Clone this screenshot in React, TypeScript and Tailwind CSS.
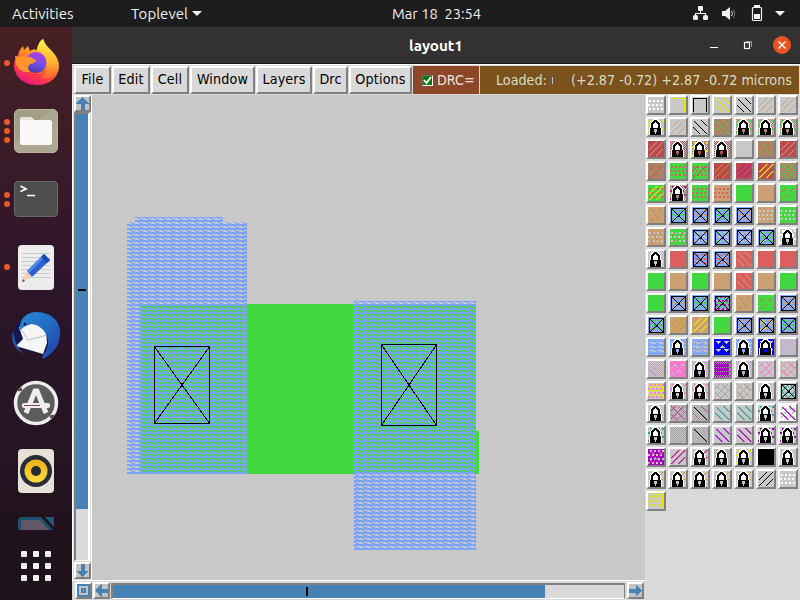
import React from "react";

const PAL: Record<string, string> = {
  g: "#c8c8c8", G: "#41d841", t: "#cba073", b: "#ad8163", r: "#dc5f5f", R: "#b94a50",
  w: "#ffffff", k: "#000000", y: "#e8e800", o: "#c99712", m: "#c7148f", p: "#ff78d0",
  B: "#82a9fc", N: "#0000f5", V: "#aa00c8", T: "#2aa6a0", s: "#a0a0a0", l: "#c0a8d0", P: "#c8509a",
};

const ROWS: string[] = [
  "g.dw g.uy g.uk g.\\y g.\\k g./t g./t",
  "g.cy.L g./t g.\\k b.\\G g.hb.cG.L g.hb.cG.L g.hb.cG.L",
  "R./t g.hR.L g.hR.cy.L g.hR.L g b.-r.=G R./t",
  "b.-R G.dr G.dr.-R R./o R./m R./y b.xG",
  "G.dr./y g.hb.cm.L G.dr t.dr G t G.-r",
  "t.=b B.nG.X B.nt.X B.nG.X B.nt.X t.dg G.dg",
  "t.dg.=b G.dg.-r B.ng.=t.X B.ng.=G.X B.ng.=t.X B.nG.-g.X g.cw.L",
  "g.L r B.nr.X B.nr.=t.X r.\\t r r",
  "G t G t r.\\t t G",
  "G B.nt.X B.nG.X B.nG.cm.X t.=b G.-r B.nt.X",
  "B.nG.-r.X t./o t./y G B.nt.X B.nt.-y.X B.nG.X",
  "B.ng B.ng.L B.ng.\\t N.vg B.ng.L N.vg.L g.hl",
  "g.hl.\\t p.=g.-g g.hl.L V.ng.hs.mV g.hl.L g.xp g.xp.\\t",
  "g.uy.dy.cp g.cp.L g.cp.L g.xs g.xs.\\t g.L g.\\T./T.X",
  "g.L s.hg.xP s.hg.\\P.Dk g.\\T g.|t.\\T g.cT.L w.dg.\\V",
  "g.cT.L s.hg s.hg.Dk g.\\V g.|t.\\V g.cV.L g.cV.L",
  "V.cg.-m.=s g./m g./m.L s.hg.L g.cy.L k g.L",
  "g./o.L g./o.L g./o.L g./o.L g./o.L g./k g.dw",
  "g.uy.dy",
];

const THICK = ["#2aa6a0", "#aa00c8", "#c7148f", "#e8e800"];

/* Stair-stepped diagonals: each segment is [x, y, length, vertical direction]. */
function steps(segments: number[][], color: string) {
  const w = THICK.includes(color) ? 1.6 : 1;
  const d = segments
    .map(([x, y, n, dir]) => Array.from({ length: n }, (_, i) => `M${x + i} ${y + i * dir}h${w}v1h-${w}z`).join(""))
    .join("");
  return <path d={d} fill={color} shapeRendering={w > 1 ? "auto" : "crispEdges"} />;
}

const LAYERS: Record<string, (c: string) => React.ReactNode> = {
  d: (c) => (
    <g fill={c}>
      {[3, 7, 11].map((y) => [1, 5, 9, 13].map((x) => <rect key={`${x}-${y}`} x={x + (y === 7 ? -1 : 0)} y={y} width="2" height="2" />))}
    </g>
  ),
  h: (c) => (
    <g fill={c}>
      {Array.from({ length: 128 }, (_, i) => {
        const y = Math.floor(i / 8);
        return <rect key={i} x={(i % 8) * 2 + (y % 2)} y={y} width="1" height="1" />;
      })}
    </g>
  ),
  u: (c) => <path d="M1 15V1H15V15H14V2H2V15z" fill={c} />,
  "\\": (c) => steps([[1, 8, 7, 1], [2, 2, 13, 1], [9, 1, 6, 1]], c),
  "|": (c) => steps([[1, 7, 8, 1], [3, 2, 12, 1], [10, 1, 5, 1]], c),
  "/": (c) => steps([[1, 8, 8, -1], [1, 14, 14, -1], [8, 14, 7, -1]], c),
  x: (c) => steps([[1, 5, 5, -1], [1, 13, 13, -1], [6, 15, 10, -1], [1, 9, 6, 1], [1, 1, 14, 1], [8, 1, 7, 1]], c),
  "-": (c) => steps([[2, 6, 4, -1], [10, 6, 4, -1], [5, 12, 4, -1], [1, 14, 2, -1]], c),
  "=": (c) => steps([[3, 2, 4, 1], [11, 2, 3, 1], [7, 8, 4, 1], [2, 11, 3, 1]], c),
  c: (c) => (
    <g fill={c}>
      {[1, 5, 9, 13].map((y) => [2, 6, 10, 14].map((x) => <rect key={`${x}-${y}`} x={x - (y % 8 === 5 ? 2 : 0)} y={y} width="1.5" height="1.5" />))}
    </g>
  ),
  n: (c) => <path d="M1 3.5h5M9 3.5h5M4 4.5h4M12 4.5h4M1 7.5h5M9 7.5h5M4 8.5h4M12 8.5h4M1 11.5h5M9 11.5h5M4 12.5h4M12 12.5h4" stroke={c} />,
  m: (c) => <path d="M1 4.5h14M1 8.5h14M1 12.5h14" stroke={c} strokeWidth="3" />,
  v: (c) => <path d="M1 2l3 3 3-3zM9 2l3 3 3-3zM5 9l3-3 3 3zM1 10l3 3 3-3zM9 10l3 3 3-3z" fill={c} />,
  D: (c) => steps([[2, 2, 13, 1]], c),
};

function Swatch({ spec }: { spec: string }) {
  const [base, ...layers] = spec.split(".");
  return (
    <div className="h-5 w-5 border-2 border-t-white border-l-white border-r-[#808080] border-b-[#808080] bg-[#d9d9d9]">
      <svg width="16" height="16" viewBox="0 0 16 16" shapeRendering="crispEdges" className="block">
        <rect width="16" height="16" fill={PAL[base]} />
        {layers.map((l, i) => {
          if (l === "L")
            return (
              <g key={i}>
                <path d="M1 16V9H2V4H3V2H4V1H5V0H10V1H11V2H12V4H13V9H14V16z" fill="#fff" />
                <path d="M3 9V4H4V3H5V2H6V1H9V2H10V3H11V4H12V9H10V5H9V4H8V3H7V4H6V5H5V9z" fill="#000" />
                <rect x="2" y="9" width="11" height="7" fill="#000" />
                <path d="M6 10h3v3H8v2H7v-2H6z" fill={PAL[layers[0][0] === "h" ? layers[0][1] : base]} />
              </g>
            );
          if (l === "X")
            return (
              <g key={i} stroke="#000" fill="none">
                <rect x="1.5" y="1.5" width="14" height="14" />
                <path d="M2 2L15 15M15 2L2 15" />
                <rect x="7.5" y="7.5" width="2" height="2" fill="#000" stroke="none" />
              </g>
            );
          return <g key={i}>{LAYERS[l[0]](PAL[l[1]])}</g>;
        })}
      </svg>
    </div>
  );
}

function Contact({ x, y, w, h }: { x: number; y: number; w: number; h: number }) {
  return (
    <g stroke="#000" fill="none">
      <rect x={x + 0.5} y={y + 0.5} width={w - 1} height={h - 1} />
      <path d={`M${x} ${y}L${x + w} ${y + h}M${x + w} ${y}L${x} ${y + h}`} />
    </g>
  );
}

function LayoutCanvas() {
  return (
    <svg width="553" height="485" viewBox="92 95 553 485" shapeRendering="crispEdges" className="block bg-[#c8c8c8]">
      <defs>
        <pattern id="metal" width="8" height="4" patternUnits="userSpaceOnUse">
          <path d="M0 0h8v2H0zM2 2h2v1H2zM4 3h3v1H4z" fill="#7ba3fb" />
        </pattern>
        <pattern id="metalDiff" width="8" height="8" patternUnits="userSpaceOnUse">
          <rect width="8" height="8" fill="#7ba3fb" />
          <path d="M4 2h4v1H4zM0 2h2v1H0zM7 3h1v1H7zM0 3h4v1H0zM4 6h4v1H4zM0 6h2v1H0zM7 7h1v1H7zM0 7h4v1H0zM2 4h2v1H2z" fill="#41d841" />
        </pattern>
      </defs>
      <path d="M135 217H223V222H247V474H127V222H135z" fill="url(#metal)" />
      <path d="M354 301H476V550H354z" fill="url(#metal)" />
      <rect x="140" y="304" width="107" height="170" fill="url(#metalDiff)" />
      <rect x="247" y="304" width="107" height="170" fill="#41d841" />
      <rect x="354" y="304" width="122" height="170" fill="url(#metalDiff)" />
      <rect x="476" y="431" width="3" height="43" fill="#41d841" />
      <Contact x={154} y={346} w={56} h={78} />
      <Contact x={381} y={344} w={56} h={82} />
    </svg>
  );
}

const ARROWS: Record<string, string> = {
  up: "M6.5 0L13 6.5H8.5V13H4.5V6.5H0z",
  down: "M6.5 13L13 6.5H8.5V0H4.5V6.5H0z",
  left: "M0 6.5L6.5 0V4.5H13V8.5H6.5V13z",
  right: "M13 6.5L6.5 0V4.5H0V8.5H6.5V13z",
};

function ArrowButton({ dir }: { dir: string }) {
  return (
    <div className="flex h-[17px] w-[17px] shrink-0 items-center justify-center border-2 border-t-white border-l-white border-r-[#808080] border-b-[#808080] bg-[#c3c3c3]">
      <svg width="13" height="13" viewBox="0 0 13 13" shapeRendering="crispEdges" className="shrink-0">
        {dir === "zoom" ? (
          <g fill="none" stroke="#4682b4" strokeWidth="2">
            <rect x="1" y="1" width="11" height="11" />
            <rect x="5" y="5" width="3" height="3" />
          </g>
        ) : (
          <path d={ARROWS[dir]} fill="#4682b4" />
        )}
      </svg>
    </div>
  );
}

function DockItem({ dots, children, className }: { dots: number; children: React.ReactNode; className: string }) {
  return (
    <div className={`flex w-[72px] items-center ${className}`}>
      <div className="ml-1 flex w-[6px] shrink-0 flex-col gap-[3px]">
        {Array.from({ length: dots }, (_, i) => (
          <i key={i} className="block h-[6px] w-[6px] rounded-full bg-[#ec5a29]" />
        ))}
      </div>
      <svg width="52" height="52" viewBox="0 0 52 52" className="block shrink-0">{children}</svg>
    </div>
  );
}

function Dock() {
  return (
    <aside className="flex w-[72px] shrink-0 flex-col bg-linear-to-b from-[#482025] via-[#2d152a] via-45% to-[#1d121a] pt-[10px]">
      <svg width="0" height="0" className="absolute">
        <defs>
          <linearGradient id="fox" x1="0.8" y1="0" x2="0.3" y2="1">
            <stop stopColor="#fff44f" /><stop offset=".4" stopColor="#ff9a24" /><stop offset=".75" stopColor="#ff3c45" /><stop offset="1" stopColor="#e31587" />
          </linearGradient>
          <linearGradient id="foxGold" x1="0" y1="0" x2="0" y2="1">
            <stop stopColor="#fff44f" /><stop offset=".6" stopColor="#ffb32c" /><stop offset="1" stopColor="#ff5f35" />
          </linearGradient>
          <linearGradient id="globe" x1=".7" y1="0" x2=".4" y2="1">
            <stop stopColor="#b83be4" /><stop offset=".55" stopColor="#7450ea" /><stop offset="1" stopColor="#483aa4" />
          </linearGradient>
          <linearGradient id="bird" x1="0" y1="0" x2="1" y2="1">
            <stop stopColor="#2c8bd7" /><stop offset=".5" stopColor="#1f6bc2" /><stop offset="1" stopColor="#2939a5" />
          </linearGradient>
          <linearGradient id="speaker" x1="0" y1="0" x2="0" y2="1"><stop stopColor="#e8b31b" /><stop offset="1" stopColor="#ffda3e" /></linearGradient>
        </defs>
      </svg>
      <DockItem dots={1} className="h-[52px]">
        <path d="M8 21C8 15 11 11 13 9L14 13L18 9L20 14Q24 11 27 13Q28 6 33 2Q35 8 41 13Q49 21 49 29C49 40 40 48 27 48C13 48 4 39 4 28Q4 24 8 18z" fill="url(#fox)" />
        <path d="M27 13Q28 5 33 2Q35 8 41 14Q48 20 48 30Q45 43 32 41Q38 34 36 25Q34 16 27 13z" fill="url(#foxGold)" />
        <circle cx="26" cy="25.500" r="10.500" fill="url(#globe)" />
        <path d="M5 19Q9 20 14 19L20 20L26 23Q26 26 20 27Q16 31 20 35Q10 37 6 27z" fill="#ff942d" />
      </DockItem>
      <DockItem dots={3} className="mt-4 h-[52px]">
        <rect x="4.500" y="4.500" width="43" height="43" rx="4.500" fill="#a39c87" stroke="#bdb5a0" />
        <path d="M5 36L40 5H44Q47 5 47 9V43Q47 47 43 47H9Q5 47 5 43z" fill="#fff" opacity=".1" />
        <path d="M10 17V14Q10 12 12 12H21L26 16z" fill="#e8e4d8" />
        <rect x="10" y="15" width="32" height="25" rx="2.500" fill="#faf9f7" />
      </DockItem>
      <DockItem dots={2} className="mt-4 h-[52px]">
        <rect x="4.500" y="8.500" width="43" height="35" rx="3.500" fill="#4d4d4d" stroke="#69696a" />
        <path d="M10.500 13L16 16L10.500 18.500" fill="none" stroke="#fff" strokeWidth="1.700" />
        <path d="M17 22.500h8" stroke="#fff" strokeWidth="1.500" />
      </DockItem>
      <DockItem dots={1} className="mt-4 h-[52px]">
        <rect x="8" y="4" width="36" height="45" rx="4" fill="#ececec" />
        <path d="M12 12.500H40M12 16.500H40M12 20.500H40M12 24.500H40M12 28.500H40M12 32.500H40M12 36.500H40" stroke="#c2c2c2" strokeWidth=".8" />
        <path d="M12 41L17 31L21 36z" fill="#f6cda9" /><path d="M12 41L13 38L15 40z" fill="#444" />
        <path d="M17 30L34 13L40 19L22 36z" fill="#2860d2" /><path d="M17 30L34 13L36 15L19 32z" fill="#5088ed" />
        <path d="M34 13L40 19L37 22L31 16z" fill="#174db8" />
      </DockItem>
      <DockItem dots={0} className="mt-4 h-[52px]">
        <path d="M11 12Q18 2 32 4Q49 8 50 27Q49 42 36 49L33 45Q14 42 5 37Q-1 25 9 13z" fill="#151650" />
        <path d="M9 18L13 30L6 37L33 45L37 34L36 22L25 14z" fill="#f5f6f8" />
        <path d="M10 18L18 31L37 26" stroke="#bcc1cb" fill="none" />
        <path d="M11 12Q16 3 27 3Q46 4 50 20Q52 40 33 50Q31 48 36 42Q40 35 36 25Q30 15 21 15Q14 17 9 22z" fill="url(#bird)" />
        <path d="M3 22Q-1 37 14 45Q9 41 7 36Q5 33 3 22z" fill="#2757b4" />
        <circle cx="15" cy="15" r="1.300" fill="#101340" />
      </DockItem>
      <DockItem dots={0} className="mt-4 h-[52px]">
        <circle cx="26" cy="26" r="20.500" fill="#5c5c5c" stroke="#ededed" strokeWidth="3.500" />
        <path d="M8 13L12 12M40 40L44 39" stroke="#50504f" strokeWidth="3" />
        <path d="M16 36L25 14H27L36 36" fill="none" stroke="#eee" strokeWidth="5" />
        <rect x="12" y="26" width="28" height="5" rx="2" fill="#eee" /><path d="M14 28.500H30" stroke="#8c3c83" />
      </DockItem>
      <DockItem dots={0} className="mt-4 h-[52px]">
        <rect x="8" y="4" width="36" height="44" rx="4" fill="#e6e1d6" />
        <circle cx="26" cy="26" r="16" fill="#292c36" /><circle cx="26" cy="26" r="11.500" fill="url(#speaker)" /><circle cx="26" cy="26" r="5" fill="#262b2f" />
      </DockItem>
      <svg width="36" height="13" viewBox="0 0 36 13" className="mt-[20px] ml-[18px] block shrink-0">
        <path d="M0 13V4Q0 0 4 0H23L35 13z" fill="#1c506e" /><path d="M3 13V6Q3 3 6 3H22L31 13z" fill="#625865" /><path d="M27 0H36V10z" fill="#1f567c" />
      </svg>
      <div className="mt-[21px] ml-[21px] grid grid-cols-3 gap-[6px] self-start">
        {Array.from({ length: 9 }, (_, i) => <i key={i} className="block h-[6px] w-[6px] rounded-[1px] bg-[#f3f1f1]" />)}
      </div>
    </aside>
  );
}

const MENUS: [string, string][] = [
  ["File", "w-[37px]"], ["Edit", "w-[38px]"], ["Cell", "w-[38px]"], ["Window", "w-[65px]"],
  ["Layers", "w-[56px]"], ["Drc", "w-[35px]"], ["Options", "w-[63px]"],
];

export default function App() {
  return (
    <div className="flex h-[600px] w-[800px] flex-col overflow-hidden bg-[#d9d9d9] font-['Ubuntu','Noto_Sans',sans-serif]">
      <header className="flex h-[27px] shrink-0 items-center bg-[#1d1d1d] text-[15px] text-[#f0f0f0]">
        <span className="ml-3 w-[119px] pt-px">Activities</span>
        <span className="w-[61px] pt-px">Toplevel</span>
        <svg width="10" height="6" className="mt-px"><path d="M0 0H10L5 5z" fill="#f2f2f2" /></svg>
        <span className="ml-[190px] w-[300px] text-[14.67px] whitespace-pre">Mar 18  23:54</span>
        <svg width="100" height="18" viewBox="0 0 100 18" className="shrink-0">
          <g fill="#f2f2f2" stroke="none">
            <rect x="6" y="1" width="5" height="5" rx="1" /><rect x="1" y="10" width="5" height="5" rx="1.500" /><rect x="11" y="10" width="5" height="5" rx="1.500" />
            <path d="M8 5h1v3h5v3h-1V9H4v2H3V8h5z" />
            <path d="M30 6h3l5-4v13l-5-4h-3z" />
          </g>
          <path d="M39.500 6Q41.500 8.500 39.500 11" stroke="#eee" fill="none" /><path d="M41 4Q44.500 8.500 41 13" stroke="#777" fill="none" />
          <rect x="60.500" y="2.500" width="9" height="13" rx="1" stroke="#f2f2f2" strokeWidth="1.200" fill="none" /><rect x="62" y="0" width="6" height="2" fill="#f2f2f2" /><rect x="62" y="9" width="6" height="5" fill="#f2f2f2" />
          <path d="M83 6H93L88 11z" fill="#f2f2f2" />
        </svg>
      </header>
      <div className="flex min-h-0 flex-1">
        <Dock />
        <main className="flex w-[728px] flex-col">
          <div className="flex h-[37px] shrink-0 items-center border-b border-[#161616] bg-[#333132] text-white">
            <span className="ml-[337px] w-[301px] pt-[2px] text-[15.200px] font-bold">layout1</span>
            <svg width="90" height="30" viewBox="0 0 90 30" className="shrink-0">
              <path d="M0 17.500h8" stroke="#fff" />
              <rect x="34.500" y="12.500" width="5" height="6" fill="none" stroke="#fff" strokeWidth="1.200" /><path d="M36 11.500h5.500V17" fill="none" stroke="#999" />
              <circle cx="72" cy="15" r="9" fill="#e95420" /><path d="M68.500 11.500L75.500 18.500M75.500 11.500L68.500 18.500" stroke="#fff" strokeWidth="1.300" />
            </svg>
          </div>
          <nav className="flex h-[31px] shrink-0 gap-px border-t border-white pt-px pb-px pl-[2px] font-['DejaVu_Sans_Condensed','DejaVu_Sans',sans-serif] text-[14.200px] leading-[26px] text-black [font-stretch:condensed]">
            {MENUS.map(([m, w]) => (
              <div key={m} className={`h-[28px] shrink-0 border-t-2 border-l-2 border-r-2 border-b-2 border-t-white border-l-white border-r-[#808080] border-b-[#808080] bg-[#d9d9d9] text-center leading-[23px] tracking-[0.15px] whitespace-nowrap ${w}`}>{m}</div>
            ))}
            <div className="flex h-[28px] w-[66px] shrink-0 items-center bg-[#8c4628] pl-[9px] text-white">
              <span className="mr-[4px] flex h-[11px] w-[11px] shrink-0 items-center justify-center border border-t-[#657b65] border-l-[#657b65] border-r-white border-b-white bg-[#08790c]">
                <svg width="9" height="9"><path d="M1 4L3.500 7L8 1" fill="none" stroke="#fff" strokeWidth="1.800" /></svg>
              </span>
              <span className="text-[#eee3dc]">DRC=</span>
            </div>
            <div className="flex h-[28px] w-[319px] shrink-0 items-center bg-[#7b511e] text-[#d7dec4]">
              <span className="ml-4 w-[55px] whitespace-nowrap">Loaded: </span><i className="ml-[1px] h-[7px] w-px bg-[#aac6df]" />
              <span className="ml-[18px] whitespace-nowrap">(+2.87 -0.72) +2.87 -0.72 microns</span>
            </div>
          </nav>
          <div className="flex h-[505px]">
            <div>
              <div className="flex">
                <div className="flex h-[485px] w-5 flex-col items-center border-r border-l border-white bg-[#d9d9d9]">
                  <ArrowButton dir="up" />
                  <div className="mb-px h-[449px] w-4 shrink-0 border-t-2 border-l-2 border-r-2 border-b border-t-[#808080] border-l-[#808080] border-r-white border-b-white">
                    <div className="h-[395px] bg-[#4682b4] pt-[174px]"><div className="mx-[2px] mt-px h-[2px] bg-black" /></div>
                  </div>
                  <ArrowButton dir="down" />
                </div>
                <LayoutCanvas />
              </div>
              <div className="flex h-5 w-[573px] items-center border-t border-white pl-[3px]">
                <ArrowButton dir="zoom" />
                <div className="ml-px flex items-center">
                  <ArrowButton dir="left" />
                  <div className="ml-px h-4 w-[514px] border-t-2 border-l-2 border-r border-b border-t-[#808080] border-l-[#808080] border-r-[#808080] border-b-white">
                    <div className="flex h-[13px] w-[432px] items-center bg-[#4682b4] pl-[193px]"><i className="h-[9px] w-[2px] bg-black" /></div>
                  </div>
                  <div className="ml-[2px] flex"><ArrowButton dir="right" /></div>
                </div>
              </div>
            </div>
            <section className="grid w-[155px] grid-cols-[repeat(7,20px)] content-start gap-[2px] bg-[#d9d9d9] pl-px">
              {ROWS.flatMap((row, y) => row.split(" ").map((s, x) => <Swatch key={`${y}-${x}`} spec={s} />))}
            </section>
          </div>
        </main>
      </div>
    </div>
  );
}
